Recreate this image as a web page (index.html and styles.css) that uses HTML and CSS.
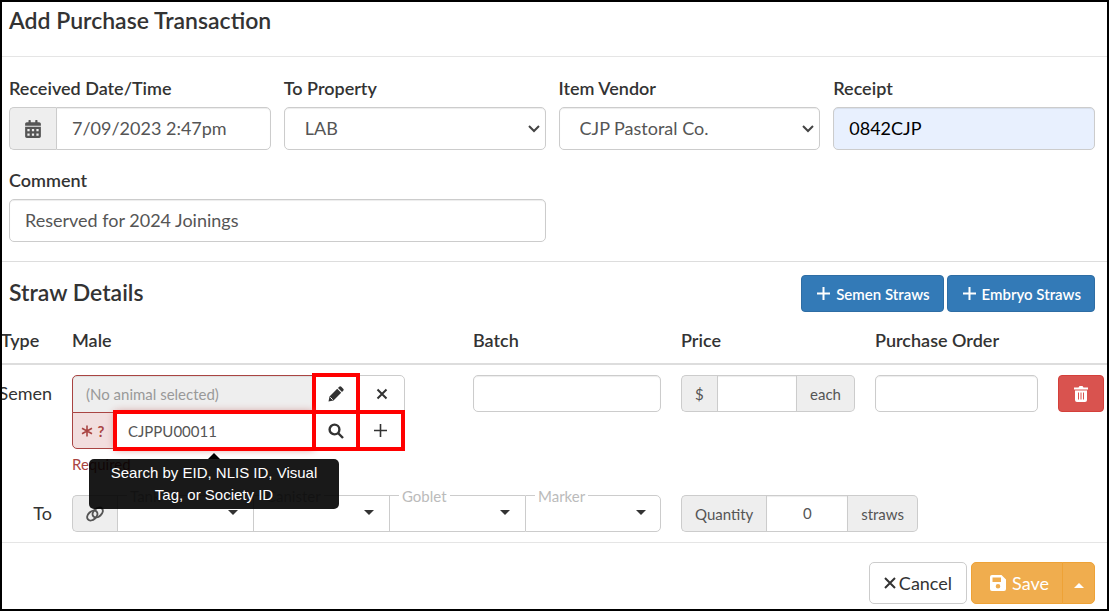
FILE: index.html
```html
<!DOCTYPE html>
<html lang="en">
<head>
    <meta charset="UTF-8">
    <meta name="viewport" content="width=device-width, initial-scale=1.0">
    <title>Add Purchase Transaction</title>
    <link rel="stylesheet" href="styles.css">
</head>
<body>
    <form class="modal">
        <header class="modal-header">
            <h1>Add Purchase Transaction</h1>
        </header>

        <!-- Transaction details -->
        <section class="details">
            <div class="field">
                <label for="received">Received Date/Time</label>
                <div class="input-group">
                    <span class="addon addon-date">
                        <svg class="icon-calendar" viewBox="0 0 448 512"><path fill-rule="evenodd" d="M0 464c0 26 22 48 48 48h352c26 0 48-22 48-48V192H0zM64 256h64v64H64zM192 256h64v64h-64zM320 256h64v64h-64zM64 384h64v64H64zM192 384h64v64h-64zM320 384h64v64h-64zM400 64h-48V16c0-9-7-16-16-16h-32c-9 0-16 7-16 16v48H160V16c0-9-7-16-16-16h-32c-9 0-16 7-16 16v48H48C22 64 0 86 0 112v48h448v-48c0-26-22-48-48-48z"/></svg>
                    </span>
                    <input type="text" id="received" class="control" value="7/09/2023 2:47pm">
                </div>
            </div>
            <div class="field">
                <label for="property">To Property</label>
                <div class="select">
                    <select id="property" class="control">
                        <option>LAB</option>
                    </select>
                    <svg class="chevron" viewBox="0 0 12 8"><path d="M1 1l5 5 5-5"/></svg>
                </div>
            </div>
            <div class="field">
                <label for="vendor">Item Vendor</label>
                <div class="select">
                    <select id="vendor" class="control">
                        <option>CJP Pastoral Co.</option>
                    </select>
                    <svg class="chevron" viewBox="0 0 12 8"><path d="M1 1l5 5 5-5"/></svg>
                </div>
            </div>
            <div class="field">
                <label for="receipt">Receipt</label>
                <input type="text" id="receipt" class="control autofilled" value="0842CJP">
            </div>
            <div class="field field-wide">
                <label for="comment">Comment</label>
                <input type="text" id="comment" class="control" value="Reserved for 2024 Joinings">
            </div>
        </section>

        <!-- Straw lines -->
        <section class="straws">
            <div class="straws-header">
                <h2>Straw Details</h2>
                <div class="straws-actions">
                    <button type="button" class="btn btn-primary">
                        <svg class="icon-add" viewBox="0 0 13 13"><path d="M6.500 0v13M0 6.500h13"/></svg>
                        Semen Straws
                    </button>
                    <button type="button" class="btn btn-primary">
                        <svg class="icon-add" viewBox="0 0 13 13"><path d="M6.500 0v13M0 6.500h13"/></svg>
                        Embryo Straws
                    </button>
                </div>
            </div>

            <table class="straw-table">
                <colgroup>
                    <col class="col-type">
                    <col>
                    <col class="col-batch">
                    <col class="col-price">
                    <col class="col-order">
                    <col class="col-remove">
                </colgroup>
                <thead>
                    <tr>
                        <th>Type</th>
                        <th>Male</th>
                        <th>Batch</th>
                        <th>Price</th>
                        <th>Purchase Order</th>
                        <th></th>
                    </tr>
                </thead>
                <tbody>
                    <tr>
                        <td class="row-name">Semen</td>
                        <td>
                            <div class="animal">
                                <input type="text" class="control animal-name" placeholder="(No animal selected)" aria-label="Selected animal" readonly>
                                <button type="button" class="tool highlight" aria-label="Edit">
                                    <svg width="16" height="16" viewBox="0 0 16 16"><path d="M.5 15.500l1-5 7.700-7.700 4 4-7.700 7.700zM10 2l1.200-1.200a1.500 1.500 0 0 1 2.100 0l1.900 1.900a1.500 1.500 0 0 1 0 2.100L14 6z"/><path class="cut" d="M2.300 11.300l2.400 2.400"/></svg>
                                </button>
                                <button type="button" class="tool tool-clear" aria-label="Clear">
                                    <svg width="12" height="12" viewBox="0 0 12 12"><path class="line" d="M1.500 1.500l9 9M10.500 1.500l-9 9"/></svg>
                                </button>
                                <span class="addon addon-error">
                                    <svg width="12" height="12" viewBox="0 0 12 12"><path class="line thin" d="M6 .5v11M1 3.200l10 5.600M11 3.200L1 8.800"/></svg>
                                    <b>?</b>
                                </span>
                                <input type="text" class="control highlight animal-search" value="CJPPU00011" aria-label="Search animal">
                                <button type="button" class="tool highlight" aria-label="Search">
                                    <svg width="16" height="16" viewBox="0 0 16 16"><circle class="line thick" cx="6.500" cy="6.500" r="4.900"/><path class="line thick" d="M10 10l5 5"/></svg>
                                </button>
                                <button type="button" class="tool highlight tool-last" aria-label="Add animal">
                                    <svg width="13" height="13" viewBox="0 0 13 13"><path class="line thin" d="M6.500 0v13M0 6.500h13"/></svg>
                                </button>
                                <div class="tooltip" role="tooltip">Search by EID, NLIS ID, Visual Tag, or Society ID</div>
                            </div>
                            <p class="error">Required</p>
                        </td>
                        <td><input type="text" class="control" aria-label="Batch"></td>
                        <td>
                            <div class="input-group price">
                                <span class="addon">$</span>
                                <input type="text" class="control" aria-label="Price">
                                <span class="addon">each</span>
                            </div>
                        </td>
                        <td><input type="text" class="control" aria-label="Purchase Order"></td>
                        <td>
                            <button type="button" class="btn btn-danger" aria-label="Remove">
                                <svg width="14" height="16" viewBox="0 0 14 16"><path d="M0 1.500h4.500L5.500 0h3l1 1.500H14v2H0zM1 4.500h12V14a2 2 0 0 1-2 2H3a2 2 0 0 1-2-2z"/><path class="slot" d="M4.500 6.500v7M7 6.500v7M9.500 6.500v7"/></svg>
                            </button>
                        </td>
                    </tr>
                    <tr>
                        <td class="row-name">To</td>
                        <td colspan="2">
                            <div class="location">
                                <span class="addon addon-link">
                                    <svg width="18" height="16" viewBox="0 0 18 16"><ellipse cx="6.300" cy="9.500" rx="5.800" ry="4" transform="rotate(-42 6.300 9.500)"/><ellipse cx="11.700" cy="6.500" rx="5.800" ry="4" transform="rotate(-42 11.700 6.500)"/></svg>
                                </span>
                                <div class="slot-field">
                                    <label for="tank">Tank</label>
                                    <select id="tank"><option></option></select>
                                    <svg class="caret" viewBox="0 0 10 5"><path d="M0 0h10L5 5z"/></svg>
                                </div>
                                <div class="slot-field">
                                    <label for="canister">Canister</label>
                                    <select id="canister"><option></option></select>
                                    <svg class="caret" viewBox="0 0 10 5"><path d="M0 0h10L5 5z"/></svg>
                                </div>
                                <div class="slot-field">
                                    <label for="goblet">Goblet</label>
                                    <select id="goblet"><option></option></select>
                                    <svg class="caret" viewBox="0 0 10 5"><path d="M0 0h10L5 5z"/></svg>
                                </div>
                                <div class="slot-field">
                                    <label for="marker">Marker</label>
                                    <select id="marker"><option></option></select>
                                    <svg class="caret" viewBox="0 0 10 5"><path d="M0 0h10L5 5z"/></svg>
                                </div>
                            </div>
                        </td>
                        <td colspan="3">
                            <div class="input-group quantity">
                                <label class="addon" for="quantity">Quantity</label>
                                <input type="text" id="quantity" class="control" value="0">
                                <span class="addon">straws</span>
                            </div>
                        </td>
                    </tr>
                </tbody>
            </table>
        </section>

        <footer class="modal-footer">
            <button type="button" class="btn btn-default">
                <svg width="12" height="12" viewBox="0 0 12 12"><path d="M1 1l10 10M11 1L1 11"/></svg>
                Cancel
            </button>
            <div class="btn-group">
                <button type="submit" class="btn btn-warning">
                    <svg width="16" height="16" viewBox="0 0 16 16"><path fill-rule="evenodd" d="M2 0h9.500L16 4.500V14a2 2 0 0 1-2 2H2a2 2 0 0 1-2-2V2a2 2 0 0 1 2-2zM2.500 2.500V7h8.500V2.500zM8 9a2.300 2.300 0 1 0 0 4.600A2.300 2.300 0 0 0 8 9z"/></svg>
                    Save
                </button>
                <button type="button" class="btn btn-warning btn-caret" aria-label="More save options">
                    <svg width="10" height="5" viewBox="0 0 10 5"><path d="M0 5h10L5 0z"/></svg>
                </button>
            </div>
        </footer>
    </form>
</body>
</html>
```
FILE: styles.css
```css
:root {
    --text: #333;
    --control-text: #555;
    --border: #ccc;
    --line: #ddd;
    --addon: #eee;
    --error: #a94442;
    --error-bg: #f2dede;
    --mark: #f00;
}

*, *::before, *::after {
    box-sizing: border-box;
}

body {
    margin: 0;
    font-family: Lato, "Open Sans", sans-serif;
    font-size: 18px;
    line-height: 24px;
    color: var(--text);
    background: #fff;
}

h1, h2, p {
    margin: 0;
}

h1, h2 {
    font-size: 23px;
    line-height: 30px;
    font-weight: 600;
}

button, input, select {
    font-family: inherit;
    font-size: inherit;
    margin: 0;
}

svg {
    display: block;
    flex: none;
    fill: currentColor;
}

.modal {
    min-height: 100vh;
    border: 2px solid #000;
    overflow: hidden;
}

.modal-header {
    padding: 3px 7px 21px;
    border-bottom: 1px solid #e5e5e5;
}

/* Transaction details */
.details {
    display: grid;
    grid-template-columns: repeat(4, 1fr);
    gap: 18px 13px;
    padding: 19px 12px 19px 7px;
    border-bottom: 1px solid var(--line);
}

.field label {
    display: block;
    margin-bottom: 7px;
    font-weight: 600;
}

.field-wide {
    grid-column: span 2;
}

.control {
    width: 100%;
    height: 43px;
    padding: 0 15px 2px;
    color: var(--control-text);
    background-color: #fff;
    border: 1px solid var(--border);
    border-radius: 5px;
    box-shadow: inset 0 1px 1px rgba(0, 0, 0, 0.075);
}

.autofilled {
    color: #000;
    background-color: #e8f0fe;
}

.select {
    position: relative;
}

.select .control {
    padding: 0 30px 2px 20px;
    appearance: none;
}

.chevron {
    position: absolute;
    top: 18px;
    right: 6px;
    width: 12px;
    height: 8px;
    fill: none;
    stroke: #444;
    stroke-width: 2;
    pointer-events: none;
}

.input-group {
    display: flex;
}

.input-group .control {
    flex: 1;
    min-width: 0;
    border-radius: 0;
}

.input-group .control:last-child {
    border-radius: 0 5px 5px 0;
}

.addon {
    display: flex;
    align-items: center;
    justify-content: center;
    padding: 0 13px;
    color: var(--control-text);
    background: var(--addon);
    border: 1px solid var(--border);
}

.addon:first-child {
    border-right: 0;
    border-radius: 5px 0 0 5px;
}

.addon:last-child {
    border-left: 0;
    border-radius: 0 5px 5px 0;
}

.addon-date {
    width: 47px;
}

.icon-calendar {
    width: 16px;
    height: 18px;
}

/* Buttons */
.btn {
    display: inline-flex;
    align-items: center;
    justify-content: center;
    gap: 6px;
    height: 37px;
    padding: 0 13px;
    border: 1px solid transparent;
    border-radius: 4px;
    color: #fff;
    cursor: pointer;
}

.btn-primary {
    padding: 0 13px 0 15px;
    font-size: 15px;
    font-weight: 600;
    background: #337ab7;
    border-color: #2e6da4;
}

.btn-danger {
    width: 46px;
    background: #d9534f;
    border-color: #d43f3a;
}

.btn-default {
    gap: 3px;
    height: 42px;
    padding: 0 14px;
    color: var(--text);
    background: #fff;
    border-color: var(--border);
    border-radius: 5px;
}

.btn-warning {
    height: 42px;
    padding: 0 13px 0 18px;
    background: #f0ad4e;
    border-color: #eea236;
    border-radius: 5px 0 0 5px;
}

.btn-caret {
    width: 33px;
    margin-left: -1px;
    padding: 4px 0 0;
    border-radius: 0 5px 5px 0;
}

.btn-group {
    display: flex;
}

.icon-add, .btn-default svg {
    fill: none;
    stroke: currentColor;
    stroke-width: 2;
}

.icon-add {
    width: 13px;
    height: 13px;
}

.slot {
    stroke: #d9534f;
}

/* Straw lines */
.straws {
    padding-top: 13px;
    border-bottom: 1px solid #e5e5e5;
}

.straws-header {
    display: flex;
    align-items: center;
    justify-content: space-between;
    padding: 0 12px 0 7px;
}

.straws-header h2 {
    margin-bottom: 3px;
}

.straws-actions {
    display: flex;
    gap: 3px;
}

.straw-table {
    width: calc(100% + 4px);
    margin-left: -4px;
    table-layout: fixed;
    border-collapse: collapse;
}

.straw-table th {
    padding: 16px 10px 11px;
    font-weight: 600;
    text-align: left;
    border-bottom: 2px solid var(--line);
}

.straw-table td {
    padding: 10px;
    vertical-align: top;
}

.straw-table th:first-child {
    padding-left: 3px;
}

.straw-table td:last-child {
    padding-right: 0;
}

.straw-table .row-name {
    padding: 16px 10px 0 0;
    text-align: right;
}

.col-type {
    width: 64px;
}

.col-batch {
    width: 208px;
}

.col-price {
    width: 194px;
}

.col-order {
    width: 183px;
}

.col-remove {
    width: 59px;
}

.price {
    width: 174px;
}

.quantity {
    width: 237px;
}

.quantity .control {
    text-align: center;
}

.straw-table .control, .straw-table .addon {
    height: 37px;
    font-size: 15px;
}

.straw-table .control, .straw-table .btn {
    display: flex;
}

/* Animal picker */
.animal {
    position: relative;
    display: grid;
    grid-template-columns: 43px 1fr 44px 47px;
    grid-template-rows: 37px 37px;
    width: 333px;
}

.animal .animal-name {
    grid-column: span 2;
    height: 38px;
    padding: 0 13px;
    background: var(--addon);
    border-color: var(--error);
    border-radius: 5px 0 0 0;
}

.animal-name::placeholder {
    color: #999;
}

.animal .animal-search {
    padding: 0 12px;
    box-shadow: 0 0 8px #ce8483;
}

.addon-error {
    gap: 5px;
    padding: 0 6px 0 4px;
    color: var(--error);
    background: var(--error-bg);
    border-color: var(--error);
    border-radius: 0 0 0 5px;
}

.tool {
    display: flex;
    align-items: center;
    justify-content: center;
    padding: 0;
    color: var(--text);
    background: #fff;
    border: 1px solid var(--border);
}

.tool-clear {
    border-radius: 0 5px 0 0;
}

.tool-last {
    margin-right: 2px;
}

.highlight {
    position: relative;
    z-index: 1;
    border-radius: 0;
    outline: 4px solid var(--mark);
    outline-offset: -2px;
}

.line {
    fill: none;
    stroke: currentColor;
    stroke-width: 2;
}

.thin {
    stroke-width: 1.600;
}

.thick {
    stroke-width: 2.400;
}

.cut {
    stroke: #fff;
}

.tooltip {
    position: absolute;
    z-index: 2;
    top: 84px;
    left: 17px;
    width: 250px;
    padding: 3px 14px;
    font-family: "Liberation Sans", Arial, sans-serif;
    font-size: 15px;
    line-height: 22px;
    text-align: center;
    color: #fff;
    background: rgba(0, 0, 0, 0.9);
    border-radius: 5px;
}

.tooltip::before {
    content: "";
    position: absolute;
    bottom: 100%;
    left: 50%;
    margin-left: -6px;
    border: 6px solid transparent;
    border-top: 0;
    border-bottom-color: #000;
}

.error {
    margin-top: 4px;
    font-size: 15px;
    line-height: 22px;
    color: var(--error);
}

/* Storage location */
.location {
    display: flex;
    height: 37px;
}

.addon-link {
    width: 45px;
}

.addon-link svg {
    fill: none;
    stroke: currentColor;
    stroke-width: 2;
}

.slot-field {
    position: relative;
    flex: 1;
}

.slot-field label {
    position: absolute;
    top: -9px;
    left: 10px;
    padding: 0 3px;
    font-size: 15px;
    line-height: 20px;
    color: #bbb;
    background: #fff;
}

.slot-field select {
    width: 100%;
    height: 37px;
    appearance: none;
    background: #fff;
    border: 1px solid var(--border);
    border-right: 0;
    border-radius: 0;
}

.slot-field:last-child select {
    border-right: 1px solid var(--border);
    border-radius: 0 5px 5px 0;
}

.caret {
    position: absolute;
    top: 15px;
    right: 15px;
    width: 10px;
    height: 5px;
    pointer-events: none;
}

.modal-footer {
    display: flex;
    justify-content: flex-end;
    gap: 4px;
    padding: 19px 12px 5px;
}
```
